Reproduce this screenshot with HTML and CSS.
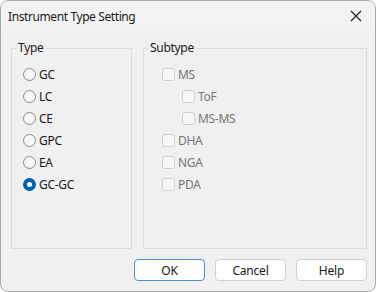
FILE: index.html
```html
<!DOCTYPE html>
<html>
<head>
<meta charset="utf-8">
<link rel="stylesheet" href="styles.css">
</head>
<body>
<div class="window">
  <div class="titlebar">
    <span class="title">Instrument Type Setting</span>
    <span class="close">
      <svg width="12" height="12" viewBox="0 0 12 12"><path d="M1 1 L11 11 M11 1 L1 11" stroke="#1a1a1a" stroke-width="1.1" fill="none"/></svg>
    </span>
  </div>
  <div class="content">
    <div class="groups">
      <div class="group type">
        <span class="caption">Type</span>
        <div class="list">
          <div class="row"><span class="radio"></span><span>GC</span></div>
          <div class="row"><span class="radio"></span><span>LC</span></div>
          <div class="row"><span class="radio"></span><span>CE</span></div>
          <div class="row"><span class="radio"></span><span>GPC</span></div>
          <div class="row"><span class="radio"></span><span>EA</span></div>
          <div class="row"><span class="radio checked"></span><span>GC-GC</span></div>
        </div>
      </div>
      <div class="group subtype">
        <span class="caption">Subtype</span>
        <div class="list">
          <div class="row disabled"><span class="check"></span><span>MS</span></div>
          <div class="row disabled indent"><span class="check"></span><span>ToF</span></div>
          <div class="row disabled indent"><span class="check"></span><span>MS-MS</span></div>
          <div class="row disabled"><span class="check"></span><span>DHA</span></div>
          <div class="row disabled"><span class="check"></span><span>NGA</span></div>
          <div class="row disabled"><span class="check"></span><span>PDA</span></div>
        </div>
      </div>
    </div>
    <div class="buttons">
      <button class="btn default">OK</button>
      <button class="btn">Cancel</button>
      <button class="btn">Help</button>
    </div>
  </div>
</div>
</body>
</html>
```
FILE: styles.css
```css
html, body {
  margin: 0;
  padding: 0;
  background: #ffffff;
}
body {
  font-family: "Noto Sans", "Open Sans", sans-serif;
  font-size: 12px;
  color: #1a1a1a;
}
.window {
  width: 376px;
  height: 292px;
  box-sizing: border-box;
  border: 1px solid #a9a9a9;
  border-radius: 8px;
  background: #f0f0f0;
  overflow: hidden;
  display: flex;
  flex-direction: column;
}
.titlebar {
  height: 30px;
  background: #f3f3f3;
  display: flex;
  align-items: center;
  justify-content: space-between;
  padding: 0 13px 0 7px;
  flex-shrink: 0;
}
.title {
  font-size: 12px;
  letter-spacing: -0.4px;
  color: #1a1a1a;
}
.close {
  display: flex;
  align-items: center;
}
.content {
  padding: 17px 8px 0 10px;
  display: flex;
  flex-direction: column;
}
.groups {
  display: flex;
  gap: 11px;
}
.group {
  position: relative;
  height: 201px;
  box-sizing: border-box;
  border: 1px solid #dcdcdc;
}
.group.type { width: 121px; }
.group.subtype { width: 224px; }
.caption {
  position: absolute;
  top: -10px;
  left: 4px;
  padding: 0 2px;
  background: #f0f0f0;
  line-height: 18px;
  color: #1a1a1a;
  letter-spacing: -0.3px;
}
.list {
  padding-top: 14px;
  display: flex;
  flex-direction: column;
}
.type .list { padding-left: 11px; }
.subtype .list { padding-left: 18px; }
.row {
  height: 22px;
  display: flex;
  align-items: center;
  gap: 3px;
  letter-spacing: -0.3px;
}
.row.indent { padding-left: 20px; }
.row.disabled { color: #767676; }
.radio {
  width: 13px;
  height: 13px;
  box-sizing: border-box;
  border: 1px solid #8a8a8a;
  border-radius: 50%;
  background: #f7f7f7;
  flex-shrink: 0;
}
.radio.checked {
  border: 4px solid #005fb8;
  background: #ffffff;
}
.check {
  width: 13px;
  height: 13px;
  box-sizing: border-box;
  border: 1px solid #cfcfcf;
  border-radius: 3px;
  background: #f7f7f7;
  flex-shrink: 0;
}
.buttons {
  display: flex;
  justify-content: flex-end;
  gap: 10px;
  margin-top: 10px;
}
.btn {
  width: 71px;
  height: 22px;
  box-sizing: border-box;
  border: 1px solid #d0d0d0;
  border-radius: 4px;
  background: #fdfdfd;
  font-family: "Noto Sans", "Open Sans", sans-serif;
  font-size: 12px;
  color: #1a1a1a;
  padding: 0;
  letter-spacing: -0.2px;
}
.btn.default {
  border: 1px solid #4a90d9;
}
```
